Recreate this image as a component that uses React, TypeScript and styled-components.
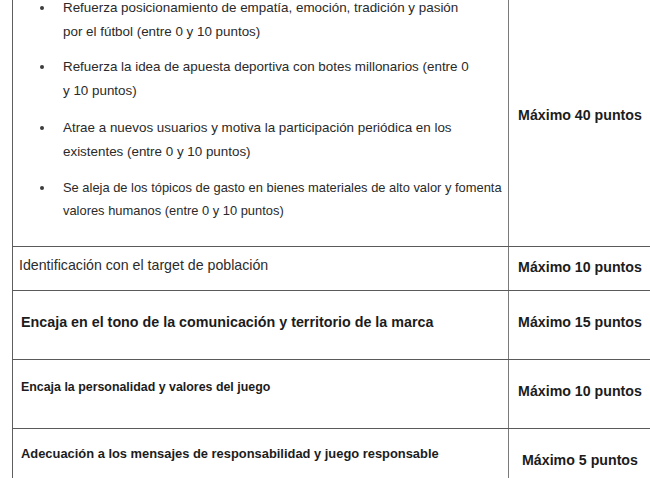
import styled, { createGlobalStyle } from "styled-components";

const GlobalStyle = createGlobalStyle`
  html, body {
    margin: 0;
    padding: 0;
    background: #fff;
    overflow: hidden;
  }
  body {
    font-family: "Liberation Sans", Arial, Helvetica, sans-serif;
    color: #1f1f1f;
  }
`;

const Sheet = styled.table`
  margin-left: 12px;
  width: 640px;
  border-collapse: collapse;
  table-layout: fixed;
`;

const Row = styled.tr<{ $h: number }>`
  height: ${(p) => p.$h}px;
`;

const Criterion = styled.td<{ $top: number; $size: number; $bold?: boolean; $open?: boolean }>`
  width: 496px;
  box-sizing: border-box;
  vertical-align: top;
  padding: ${(p) => p.$top}px 8px 0 ${(p) => (p.$bold ? 8 : 6)}px;
  border-left: 1px solid #5e5e5e;
  border-right: 1px solid #7a7a7a;
  border-top: ${(p) => (p.$open ? "none" : "1px solid #5a5a5a")};
  border-bottom: 1px solid #5a5a5a;
  font-size: ${(p) => p.$size}px;
  font-weight: ${(p) => (p.$bold ? 700 : 400)};
  color: ${(p) => (p.$bold ? "#1c1c1c" : "#2c2c2c")};
  white-space: nowrap;
`;

const Score = styled.td<{ $top: number; $open?: boolean }>`
  vertical-align: top;
  text-align: center;
  padding: ${(p) => p.$top}px 0 0;
  border-right: 1px solid #7a7a7a;
  border-top: ${(p) => (p.$open ? "none" : "1px solid #5a5a5a")};
  border-bottom: 1px solid #5a5a5a;
  font-size: 14.2px;
  font-weight: 700;
  color: #1c1c1c;
  white-space: nowrap;
`;

const BulletList = styled.ul`
  list-style: none;
  margin: -4px 0 0;
  padding: 0 0 0 20px;
`;

const Item = styled.li<{ $size: number; $lh: number; $gap: number }>`
  display: grid;
  grid-template-columns: 24px auto;
  margin-top: ${(p) => p.$gap}px;
  font-size: ${(p) => p.$size}px;
  line-height: ${(p) => p.$lh}px;
  color: #2a2a2a;
  white-space: nowrap;
`;

const Dot = styled.span<{ $top: number }>`
  width: 4px;
  height: 4px;
  margin: ${(p) => p.$top}px 0 0 1px;
  border-radius: 50%;
  background: #3c3c3c;
`;

const items = [
  {
    lines: ["Refuerza posicionamiento de empatía, emoción, tradición y pasión", "por el fútbol (entre 0 y 10 puntos)"],
    size: 13.4,
    lh: 24,
    gap: 0,
    dot: 10,
  },
  {
    lines: ["Refuerza la idea de apuesta deportiva con botes millonarios (entre 0", "y 10 puntos)"],
    size: 13.4,
    lh: 24,
    gap: 11,
    dot: 10,
  },
  {
    lines: ["Atrae a nuevos usuarios y motiva la participación periódica en los", "existentes (entre 0 y 10 puntos)"],
    size: 13.4,
    lh: 24,
    gap: 13,
    dot: 10,
  },
  {
    lines: ["Se aleja de los tópicos de gasto en bienes materiales de alto valor y fomenta", "valores humanos (entre 0 y 10 puntos)"],
    size: 12.9,
    lh: 23,
    gap: 12,
    dot: 9.5,
  },
];

const rows = [
  { h: 44, text: "Identificación con el target de población", size: 14.2, bold: false, top: 10, score: "Máximo 10 puntos", scoreTop: 12 },
  { h: 69, text: "Encaja en el tono de la comunicación y territorio de la marca", size: 14.3, bold: true, top: 23, score: "Máximo 15 puntos", scoreTop: 23 },
  { h: 69, text: "Encaja la personalidad y valores del juego", size: 12.4, bold: true, top: 20, score: "Máximo 10 puntos", scoreTop: 23 },
  { h: 60, text: "Adecuación a los mensajes de responsabilidad y juego responsable", size: 12.9, bold: true, top: 17, score: "Máximo 5 puntos", scoreTop: 23 },
];

const App = () => {
  return (
    <>
      <GlobalStyle />
      <Sheet>
        <tbody>
          <Row $h={246}>
            <Criterion $top={0} $size={13.4} $open>
              <BulletList>
                {items.map((it, i) => (
                  <Item key={i} $size={it.size} $lh={it.lh} $gap={it.gap}>
                    <Dot $top={it.dot} />
                    <span>
                      {it.lines[0]}
                      <br />
                      {it.lines[1]}
                    </span>
                  </Item>
                ))}
              </BulletList>
            </Criterion>
            <Score $top={107} $open>Máximo 40 puntos</Score>
          </Row>
          {rows.map((r, i) => (
            <Row key={i} $h={r.h}>
              <Criterion $top={r.top} $size={r.size} $bold={r.bold}>
                {r.text}
              </Criterion>
              <Score $top={r.scoreTop}>{r.score}</Score>
            </Row>
          ))}
        </tbody>
      </Sheet>
    </>
  );
};

export default App;
